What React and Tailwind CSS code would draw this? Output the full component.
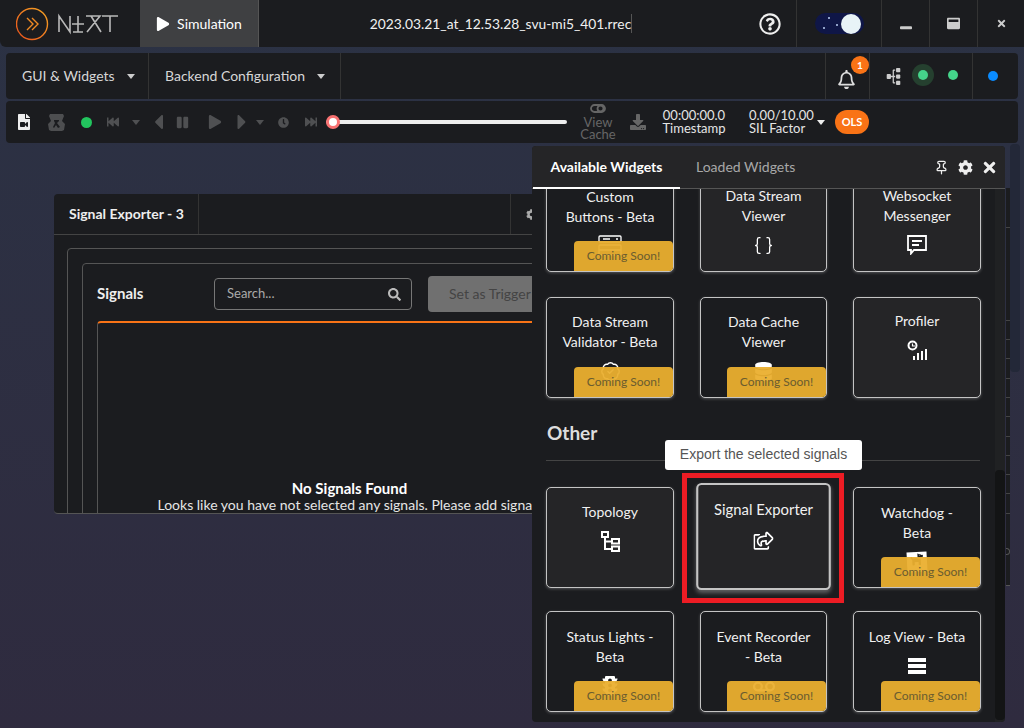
import React from 'react';
import { Braces, BadgeCheck, Pin } from 'lucide-react';
import {
  FaCaretLeft, FaCaretRight, FaClock, FaCog, FaDatabase, FaDog, FaDownload, FaFastBackward, FaFastForward,
  FaFileVideo, FaPause, FaPlay, FaRegBell, FaRegQuestionCircle, FaRegShareSquare,
  FaSearch, FaSitemap, FaTimes, FaTrafficLight, FaVoicemail, FaWindowMaximize, FaWindowMinimize,
} from 'react-icons/fa';

const TICKS = [39, 132, 151, 170, 190, 209, 228, 248, 267, 286, 305, 325];

const Caret = ({ className = '' }) => (
  <span className={`inline-block w-0 h-0 border-x-[4px] border-x-transparent border-t-[5px] ${className}`} />
);

const Logo = () => (
  <svg width="108" height="34" viewBox="0 0 108 34" fill="none">
    <defs>
      <linearGradient id="ring" x1="1" y1="0" x2="0" y2="1">
        <stop offset="0" stopColor="#f5a524" />
        <stop offset="1" stopColor="#e8501c" />
      </linearGradient>
    </defs>
    <circle cx="16" cy="17" r="15.5" stroke="url(#ring)" strokeWidth="1.4" />
    <path d="M11 11l6 6-6 6M16 11l6 6-6 6" stroke="#f08a24" strokeWidth="1.4" />
    <path d="M43 25V9l11 16V9M56 17h12M62 9v16M57 25h10M70 9h14L71 25M75 9l10 16M86 9h16M94 9v16" stroke="#b9b9b9" strokeWidth="1.6" />
  </svg>
);

const Cell = ({ w, children }) => (
  <div className={`${w} flex items-center justify-center shrink-0`}>{children}</div>
);

const Tile = ({ title, icon, soon, pad = 'pt-[14px]', className = 'bg-[#252527]' }) => (
  <div className={`relative h-[101px] rounded-[5px] border border-[#c4c4c4] shadow-[0_1px_3px_rgba(255,255,255,0.25)] overflow-hidden text-center text-[#f1f1f1] text-[14px] leading-[20px] ${className}`}>
    <div className={`px-1 flex flex-col items-center ${pad}`}>
      <div className="whitespace-pre-line">{title}</div>
      <div className="mt-[9px] h-[20px] flex items-center justify-center text-white">{icon}</div>
    </div>
    {soon && (
      <div className="absolute right-0 bottom-0 w-[99px] h-[30px] rounded-t-[4px] bg-[#eaaf2f]/95 text-[#6a5c30] text-[12px] leading-[30px] text-center">
        Coming Soon!
      </div>
    )}
  </div>
);

const TopologyIcon = () => (
  <svg width="19" height="21" viewBox="0 0 19 21" fill="none" stroke="white" strokeWidth="2">
    <rect x="1" y="1" width="6" height="5" />
    <rect x="11" y="8" width="7" height="4.5" />
    <rect x="11" y="15.5" width="7" height="4.5" />
    <path d="M4 6v12h7M4 10.5h7" />
  </svg>
);

const ProfilerIcon = () => (
  <svg width="21" height="21" viewBox="0 0 21 21" fill="none" stroke="white">
    <circle cx="5.5" cy="5.5" r="4" strokeWidth="2" />
    <path d="M5.5 3.5v2.5h2.5" strokeWidth="1.2" />
    <path d="M7 20v-4M11 20v-7M15 20v-9M19 20V9" strokeWidth="2" />
  </svg>
);

const ButtonsIcon = () => (
  <svg width="24" height="22" viewBox="0 0 24 22" fill="none" stroke="white" strokeWidth="1.3">
    <rect x="1" y="1" width="22" height="6" rx="1" />
    <path d="M5 4h7M18 4h2" />
    <rect x="1" y="10" width="22" height="10" rx="1" />
    <path d="M1 15h22" />
  </svg>
);

const MessageIcon = () => (
  <svg width="20" height="20" viewBox="0 0 20 20" fill="none" stroke="white" strokeWidth="1.8">
    <path d="M1 1h18v14H7l-3 3.5V15H1z" />
    <path d="M5 6h10M5 10h7" />
  </svg>
);

const MaskIcon = () => (
  <svg width="17" height="17" viewBox="0 0 17 17" fill="#4d4e50">
    <path d="M2 0h13l1 2-2 5 3 3-1 6-2 1H3l-2-1-1-6 3-3-2-5z" />
    <path d="M6 6h5v1l-2 2 3 4-2 1-2-3-2 3-1-1 2-4-1-2z" fill="#1b1c1f" />
  </svg>
);

const WatchdogIcon = () => (
  <div className="w-[20px] h-[20px] bg-white flex justify-center -rotate-3">
    <FaDog size={14} color="#1b1c1f" />
  </div>
);

const BarsIcon = () => (
  <div className="flex flex-col gap-[1.5px] w-[18px]">
    <div className="h-[4.5px] bg-white" />
    <div className="h-[4.5px] bg-white" />
    <div className="h-[4.5px] bg-white" />
  </div>
);

export default function App() {
  return (
    <div className="relative w-[1024px] h-[728px] overflow-hidden bg-gradient-to-b from-[#2b3244] to-[#2f2b3f] font-['Lato','Liberation_Sans',sans-serif] text-[#e5e5e5]">
      {/* Title bar */}
      <div className="flex items-stretch h-[47px] bg-[#1b1c1f] rounded-bl-[6px]">
        <div className="w-[140px] flex items-center pl-4"><Logo /></div>
        <div className="w-[119px] flex items-center justify-center gap-[7px] bg-[#3f4042] border-r border-[#555] text-white text-[14px]">
          <FaPlay size={14} color="white" />
          Simulation
        </div>
        <div className="w-[484px] flex justify-center items-center text-[13.8px] text-[#f0f0f0]">
          <span className="h-[19px] leading-[19px] border-r border-[#555]">2023.03.21_at_12.53.28_svu-mi5_401.rrec</span>
        </div>
        <div className="w-[53px] flex items-center justify-center"><FaRegQuestionCircle size={22} color="#eee" /></div>
        <div className="w-[85px] border-l border-[#333] flex items-center justify-center">
          <div className="relative w-[49px] h-[21px] rounded-full bg-[#0f1647]">
            <span className="absolute right-[3px] top-[0.5px] w-5 h-5 rounded-full bg-[#e8f3f7]" />
            <span className="absolute left-[8px] top-[14px] w-[2px] h-[2px] bg-[#8fa0c8]" />
            <span className="absolute left-[13px] top-[4px] w-[2px] h-[2px] bg-[#8fa0c8]" />
            <span className="absolute left-[21px] top-[11px] w-[2px] h-[2px] bg-[#8fa0c8]" />
          </div>
        </div>
        <div className="w-12 border-l border-[#333] flex items-center justify-center"><FaWindowMinimize size={12} color="#ccc" /></div>
        <div className="w-12 border-l border-[#333] flex items-center justify-center"><FaWindowMaximize size={13} color="#ccc" /></div>
        <div className="w-[47px] border-l border-[#333] flex items-center justify-center"><FaTimes size={11} color="#ccc" /></div>
      </div>

      {/* Menu bar */}
      <div className="flex items-stretch h-[46px] mt-[6px] mx-[6px] w-[1012px] bg-[#1b1c1f] rounded-[4px] text-[14px] text-[#d6d6d6]">
        <div className="w-[143px] border-r border-[#333] flex items-center pl-4 pb-[2px] gap-[12px]">GUI &amp; Widgets <Caret className="border-t-[#ccc] mt-[2px]" /></div>
        <div className="w-[192px] border-r border-[#333] flex items-center pl-4 pb-[2px] gap-[12px]">Backend Configuration <Caret className="border-t-[#ccc] mt-[2px]" /></div>
        <div className="flex-1" />
        <div className="w-[44px] border-l border-[#333] flex items-center justify-center relative">
          <FaRegBell size={19} color="#ddd" className="mt-[6px] -ml-[2px]" />
          <span className="absolute left-[25px] top-[3px] w-[18px] h-[18px] rounded-full bg-[#f97316] text-white text-[10px] font-bold flex items-center justify-center">1</span>
        </div>
        <div className="w-[103px] border-l border-[#333] flex items-center relative">
          <FaSitemap size={17} color="#ccc" className="ml-[15px] -rotate-90" />
          <span className="absolute left-[42px] top-[11px] w-[22px] h-[22px] rounded-full bg-[#25402f] flex items-center justify-center">
            <span className="w-[10px] h-[10px] rounded-full bg-[#45d48a]" />
          </span>
          <span className="absolute left-[78px] top-[17px] w-[10px] h-[10px] rounded-full bg-[#45d48a]" />
        </div>
        <div className="w-[46px] border-l border-[#333] flex items-center pl-[15px]">
          <span className="w-[10px] h-[10px] rounded-full bg-[#0a8bff]" />
        </div>
      </div>

      {/* Playback bar */}
      <div className="flex items-center h-[42px] mt-[2px] mx-[6px] w-[1012px] bg-[#1b1c1f] rounded-[4px] text-[#4f5052]">
        <Cell w="w-[36px]"><FaFileVideo size={16} color="#eee" /></Cell>
        <Cell w="w-[28px]"><MaskIcon /></Cell>
        <Cell w="w-[32px]"><span className="w-[11px] h-[11px] rounded-full bg-[#22c55e]" /></Cell>
        <Cell w="w-[22px]"><FaFastBackward size={12} /></Cell>
        <Cell w="w-[24px]"><Caret className="border-t-[#4f5052]" /></Cell>
        <Cell w="w-[21px]"><FaCaretLeft size={24} /></Cell>
        <Cell w="w-[27px]"><FaPause size={13} /></Cell>
        <Cell w="w-[37px]"><FaPlay size={14} /></Cell>
        <Cell w="w-[18px]"><FaCaretRight size={24} /></Cell>
        <Cell w="w-[18px]"><Caret className="border-t-[#4f5052]" /></Cell>
        <Cell w="w-[28px]"><FaClock size={11} /></Cell>
        <Cell w="w-[28px]"><FaFastForward size={12} /></Cell>
        <div className="relative ml-px w-[241px] h-[4px] rounded-full bg-[#eee]">
          <span className="absolute left-0 -top-[5px] w-[14px] h-[14px] rounded-full bg-white border-[3px] border-[#f87171]" />
        </div>
        <div className="w-[62px] shrink-0 flex flex-col items-center text-[13px] leading-[12px] text-[#666]">
          <svg width="16" height="9" viewBox="0 0 16 9" fill="none" stroke="#666" strokeWidth="1.8"><rect x="1" y="1" width="14" height="7" rx="3.5" /><circle cx="10.5" cy="4.5" r="3" /></svg>
          <div className="mt-[3px]">View</div>
          <div>Cache</div>
        </div>
        <Cell w="w-[18px]"><FaDownload size={16} color="#666" /></Cell>
        <div className="ml-[15px] w-[64px] text-[13px] leading-[13px] text-[#e5e5e5] text-center">00:00:00.0<br />Timestamp</div>
        <div className="ml-[23px] w-[63px] text-[13px] leading-[13px] text-[#e5e5e5] whitespace-nowrap">0.00/10.00<br />SIL Factor</div>
        <Caret className="ml-[5px] border-t-[#eee]" />
        <span className="ml-[10px] w-[34px] h-[24px] rounded-full bg-[#f97316] text-white text-[11px] font-bold flex items-center justify-center">OLS</span>
      </div>

      {/* Signal Exporter window */}
      <div className="absolute left-[54px] top-[194px] w-[500px] h-[320px] bg-[#1b1c1f] rounded-[4px] border-b border-[#555] overflow-hidden">
        <div className="flex h-[41px] border-b border-[#444]">
          <div className="w-[145px] border-r border-[#333] flex items-center pl-[15px] pb-[2px] text-[14px] font-bold text-[#eee]">Signal Exporter - 3</div>
          <div className="ml-[311px] border-l border-[#333] pl-[15px] flex items-center text-[#aaa]">
            <FaCog size={11} />
          </div>
        </div>
        <div className="mt-[13px] ml-[13px] h-[400px] border border-[#555] rounded-[4px] pt-[14px] pl-[14px]">
          <div className="h-[400px] border border-[#555] rounded-[4px] pl-[14px]">
            <div className="flex items-center h-[57px] pt-[3px]">
              <div className="w-[117px] pb-[2px] text-[15px] font-bold text-[#eee]">Signals</div>
              <div className="w-[198px] h-[32px] border border-[#777] rounded-[4px] flex items-center justify-between pl-[12px] pr-[10px] text-[13px] text-[#aaa]">
                Search...
                <FaSearch size={13} color="#bbb" />
              </div>
              <div className="ml-4 w-[120px] h-[36px] pb-[2px] rounded-[4px] bg-[#707070] text-[#444] text-[14px] flex items-center pl-[21px] whitespace-nowrap overflow-hidden">Set as Trigger</div>
            </div>
            <div className="w-[504px] h-[300px] border-l border-[#555] border-t-2 border-t-[#f97316] rounded-tl-[4px] pt-[155px] text-center whitespace-nowrap">
              <div className="text-white text-[15px] font-bold leading-[20px]">No Signals Found</div>
              <div className="text-[#e5e5e5] text-[14px] leading-[14px]">Looks like you have not selected any signals. Please add signals</div>
            </div>
          </div>
        </div>
      </div>

      {/* Edge of the window behind the panel */}
      <div className="absolute left-[1006px] top-[188px] w-[4px] h-[398px] bg-[#1b1c1f] border-b border-[#555]">
        {TICKS.map((t) => (
          <div key={t} className="absolute left-0 w-full h-px bg-[#444]" style={{ top: t }} />
        ))}
        <div className="absolute left-0 top-[360px] w-[4px] h-[7px] rounded-r-full border border-l-0 border-[#555]" />
      </div>
      <div className="absolute left-[1010px] top-[144px] w-[10px] h-[228px] rounded-[4px] bg-[#232838]" />

      {/* Widgets panel */}
      <div className="absolute left-[532px] top-[146px] w-[473px] h-[576px] bg-[#1b1c1f] rounded-[4px] overflow-hidden">
        <div className="relative z-10 flex items-center h-[43px] bg-[#252527] border-b border-[#555] text-[14px]">
          <div className="w-[147px] h-[43px] ml-px flex items-center justify-center font-bold text-white border-b-2 border-white">Available Widgets</div>
          <div className="ml-[16px] mb-[2px] text-[#a8a8a8]">Loaded Widgets</div>
          <div className="ml-auto mr-[7px] flex items-center gap-[8px]">
            <Pin size={15} color="#eee" strokeWidth={2} className="mr-px" />
            <FaCog size={15} color="#eee" />
            <FaTimes size={17} color="#eee" />
          </div>
        </div>
        <div className="absolute right-0 top-[43px] bottom-0 w-[10px] bg-[#202123]">
          <div className="mt-[281px] h-[250px] rounded-[4px] bg-[#131415]" />
        </div>
        <div className="pl-[14px] pr-[10px] -mt-[18px] relative">
          <div className="grid grid-cols-[128px_127px_128px] gap-x-[26px] gap-y-[25px]">
            <Tile title={'Custom\nButtons - Beta'} soon pad="pt-[15px]" icon={<ButtonsIcon />} className="bg-[#1b1c1f]" />
            <Tile title={'Data Stream\nViewer'} icon={<Braces size={21} strokeWidth={1.5} />} />
            <Tile title={'Websocket\nMessenger'} icon={<MessageIcon />} />
            <Tile title={'Data Stream\nValidator - Beta'} soon icon={<BadgeCheck size={21} strokeWidth={1.6} />} className="bg-[#1b1c1f]" />
            <Tile title={'Data Cache\nViewer'} soon icon={<FaDatabase size={19} />} className="bg-[#1b1c1f]" />
            <Tile title="Profiler" pad="pt-[13px]" icon={<ProfilerIcon />} />
          </div>
          <div className="mt-[23px] ml-px text-[19px] font-bold text-[#ddd] leading-[24px]">Other</div>
          <div className="mt-[15px] w-[434px] h-px bg-[#444]" />
          <div className="grid grid-cols-[128px_127px_128px] gap-x-[26px] gap-y-[23px] mt-[26px]">
            <Tile title="Topology" icon={<TopologyIcon />} />
            <Tile title="Signal Exporter" pad="pt-[13px]" icon={<FaRegShareSquare size={19} />} className="relative z-10 bg-[#252527] scale-[1.06] -translate-y-px border-[#9b9b9b] border-2 shadow-[0_2px_4px_rgba(255,255,255,0.3)]" />
            <Tile title={'Watchdog -\nBeta'} soon pad="pt-[15px]" icon={<WatchdogIcon />} className="bg-[#1b1c1f]" />
            <Tile title={'Status Lights -\nBeta'} soon pad="pt-[15px]" icon={<FaTrafficLight size={20} />} className="bg-[#1b1c1f]" />
            <Tile title={'Event Recorder\n- Beta'} soon pad="pt-[15px]" icon={<FaVoicemail size={22} />} className="bg-[#1b1c1f]" />
            <Tile title="Log View - Beta" soon pad="pt-[15px]" icon={<BarsIcon />} className="bg-[#1b1c1f]" />
          </div>
        </div>
      </div>

      {/* Highlight + tooltip */}
      <div className="absolute left-[682px] top-[473px] w-[162px] h-[130px] border-[5px] border-[#ed1c24]" />
      <div className="absolute left-[665px] top-[440px] w-[197px] h-[30px] pb-[2px] rounded-[3px] bg-white text-[#555] text-[14px] flex items-center justify-center font-['Liberation_Sans',sans-serif]">
        Export the selected signals
      </div>
    </div>
  );
}
